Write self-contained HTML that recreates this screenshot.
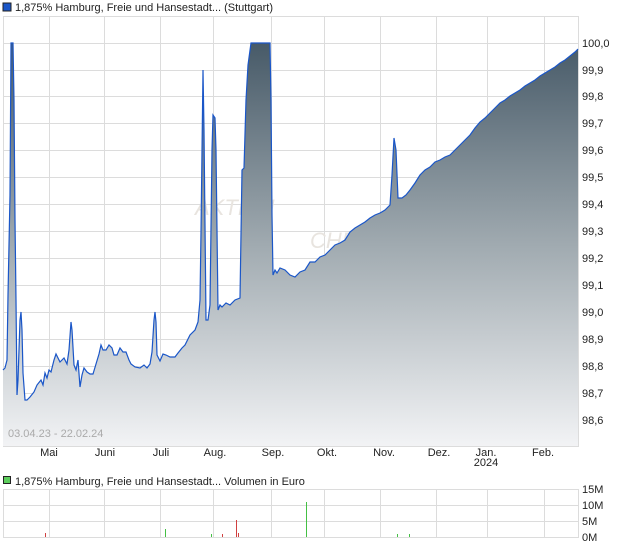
<!DOCTYPE html>
<html><head><meta charset="utf-8"><style>
body{margin:0;background:#fff;}
svg{display:block;font-family:"Liberation Sans",sans-serif;}
</style></head><body>
<svg width="620" height="546" viewBox="0 0 620 546" xmlns="http://www.w3.org/2000/svg">
<defs>
<linearGradient id="g" gradientUnits="userSpaceOnUse" x1="0" y1="43" x2="0" y2="446">
<stop offset="0" stop-color="#475a68"/>
<stop offset="0.5" stop-color="#a0aab0"/>
<stop offset="1" stop-color="#f2f3f5"/>
</linearGradient>
</defs>
<rect x="3" y="3" width="8" height="8" fill="#1a56c8" stroke="#222" stroke-width="1"/>
<text x="15" y="11" font-size="11" fill="#222">1,875% Hamburg, Freie und Hansestadt... (Stuttgart)</text>
<!-- grid -->
<g stroke="#dcdcdc" stroke-width="1">
<rect x="3.5" y="16.5" width="575" height="430" fill="none"/>
<line x1="3" y1="43.5" x2="578" y2="43.5"/><line x1="3" y1="70.5" x2="578" y2="70.5"/><line x1="3" y1="96.5" x2="578" y2="96.5"/><line x1="3" y1="123.5" x2="578" y2="123.5"/><line x1="3" y1="150.5" x2="578" y2="150.5"/><line x1="3" y1="177.5" x2="578" y2="177.5"/><line x1="3" y1="204.5" x2="578" y2="204.5"/><line x1="3" y1="231.5" x2="578" y2="231.5"/><line x1="3" y1="258.5" x2="578" y2="258.5"/><line x1="3" y1="285.5" x2="578" y2="285.5"/><line x1="3" y1="312.5" x2="578" y2="312.5"/><line x1="3" y1="339.5" x2="578" y2="339.5"/><line x1="3" y1="366.5" x2="578" y2="366.5"/><line x1="3" y1="393.5" x2="578" y2="393.5"/><line x1="3" y1="420.5" x2="578" y2="420.5"/>
<line x1="49.5" y1="16" x2="49.5" y2="446"/><line x1="104.5" y1="16" x2="104.5" y2="446"/><line x1="160.5" y1="16" x2="160.5" y2="446"/><line x1="213.5" y1="16" x2="213.5" y2="446"/><line x1="271.5" y1="16" x2="271.5" y2="446"/><line x1="324.5" y1="16" x2="324.5" y2="446"/><line x1="380.5" y1="16" x2="380.5" y2="446"/><line x1="436.5" y1="16" x2="436.5" y2="446"/><line x1="487.5" y1="16" x2="487.5" y2="446"/><line x1="544.5" y1="16" x2="544.5" y2="446"/>
</g>
<text x="195" y="215" font-size="22" fill="#e8e4df" font-style="italic">AKTIEN</text>
<text x="310" y="248" font-size="22" fill="#e8e4df" font-style="italic">CHECK</text>
<path id="ln" d="M3,370 L5,368 L7,360 L8,295 L10,195 L11,43 L13,43 L14,100 L15,220 L16,300 L17,395 L18,380 L20,320 L21,312 L22,330 L23,373 L25,400 L27,400 L30,397 L34,392 L37,385 L41,380 L43,385 L45,373 L47,378 L49,370 L51,372 L54,360 L56,354 L60,362 L64,358 L67,364 L69,350 L71,322 L72,330 L74,365 L76,370 L78,360 L80,387 L82,375 L84,368 L87,372 L90,374 L93,374 L96,364 L99,354 L101,345 L103,350 L106,350 L109,345 L112,348 L114,355 L117,355 L120,348 L123,352 L126,352 L129,360 L131,364 L135,367 L140,368 L144,365 L147,368 L150,364 L152,352 L154,320 L155,312 L156,322 L157,355 L160,361 L163,354 L166,355 L170,357 L175,357 L178,353 L182,348 L185,345 L190,335 L195,330 L198,322 L200,300 L201,232 L203,70 L204,130 L206,320 L208,320 L210,305 L212,150 L213,115 L215,118 L216,150 L218,310 L220,305 L222,307 L226,303 L230,305 L235,300 L240,298 L242,170 L244,168 L246,100 L248,65 L251,43 L270,43 L271,100 L272,215 L273,275 L275,270 L277,273 L280,268 L285,270 L290,275 L295,277 L300,272 L305,270 L310,262 L315,262 L320,257 L325,255 L330,250 L335,245 L340,243 L345,240 L350,232 L355,228 L360,225 L365,222 L370,218 L375,215 L380,213 L385,210 L390,205 L392,175 L394,138 L396,150 L398,198 L402,198 L406,195 L410,190 L415,183 L420,175 L425,170 L430,167 L435,162 L440,160 L445,157 L450,155 L455,150 L460,145 L465,140 L470,135 L475,128 L480,122 L485,118 L490,113 L495,108 L500,103 L505,100 L510,96 L515,93 L520,90 L525,86 L530,83 L535,80 L540,76 L545,73 L550,70 L555,67 L560,63 L565,60 L570,56 L575,52 L578,49" fill="none"/>
<path d="M3,370 L5,368 L7,360 L8,295 L10,195 L11,43 L13,43 L14,100 L15,220 L16,300 L17,395 L18,380 L20,320 L21,312 L22,330 L23,373 L25,400 L27,400 L30,397 L34,392 L37,385 L41,380 L43,385 L45,373 L47,378 L49,370 L51,372 L54,360 L56,354 L60,362 L64,358 L67,364 L69,350 L71,322 L72,330 L74,365 L76,370 L78,360 L80,387 L82,375 L84,368 L87,372 L90,374 L93,374 L96,364 L99,354 L101,345 L103,350 L106,350 L109,345 L112,348 L114,355 L117,355 L120,348 L123,352 L126,352 L129,360 L131,364 L135,367 L140,368 L144,365 L147,368 L150,364 L152,352 L154,320 L155,312 L156,322 L157,355 L160,361 L163,354 L166,355 L170,357 L175,357 L178,353 L182,348 L185,345 L190,335 L195,330 L198,322 L200,300 L201,232 L203,70 L204,130 L206,320 L208,320 L210,305 L212,150 L213,115 L215,118 L216,150 L218,310 L220,305 L222,307 L226,303 L230,305 L235,300 L240,298 L242,170 L244,168 L246,100 L248,65 L251,43 L270,43 L271,100 L272,215 L273,275 L275,270 L277,273 L280,268 L285,270 L290,275 L295,277 L300,272 L305,270 L310,262 L315,262 L320,257 L325,255 L330,250 L335,245 L340,243 L345,240 L350,232 L355,228 L360,225 L365,222 L370,218 L375,215 L380,213 L385,210 L390,205 L392,175 L394,138 L396,150 L398,198 L402,198 L406,195 L410,190 L415,183 L420,175 L425,170 L430,167 L435,162 L440,160 L445,157 L450,155 L455,150 L460,145 L465,140 L470,135 L475,128 L480,122 L485,118 L490,113 L495,108 L500,103 L505,100 L510,96 L515,93 L520,90 L525,86 L530,83 L535,80 L540,76 L545,73 L550,70 L555,67 L560,63 L565,60 L570,56 L575,52 L578,49 L578,446 L3,446 Z" fill="url(#g)"/>
<use href="#ln" stroke="#1a56c8" stroke-width="1.2"/>
<text x="8" y="437" font-size="11" fill="#aaa">03.04.23 - 22.02.24</text>
<g font-size="11" fill="#222">
<text x="582" y="47">100,0</text><text x="582" y="74">99,9</text><text x="582" y="100">99,8</text><text x="582" y="127">99,7</text><text x="582" y="154">99,6</text><text x="582" y="181">99,5</text><text x="582" y="208">99,4</text><text x="582" y="235">99,3</text><text x="582" y="262">99,2</text><text x="582" y="289">99,1</text><text x="582" y="316">99,0</text><text x="582" y="343">98,9</text><text x="582" y="370">98,8</text><text x="582" y="397">98,7</text><text x="582" y="424">98,6</text>
</g>
<g font-size="11" fill="#222" text-anchor="middle">
<text x="49" y="456">Mai</text><text x="105" y="456">Juni</text><text x="161" y="456">Juli</text><text x="215" y="456">Aug.</text><text x="273" y="456">Sep.</text><text x="327" y="456">Okt.</text><text x="384" y="456">Nov.</text><text x="439" y="456">Dez.</text><text x="486" y="456">Jan.</text><text x="486" y="466">2024</text><text x="543" y="456">Feb.</text>
</g>
<rect x="3.5" y="476.5" width="7" height="7" fill="#5ccd5c" stroke="#222" stroke-width="1"/>
<text x="15" y="485" font-size="11" fill="#222">1,875% Hamburg, Freie und Hansestadt... Volumen in Euro</text>
<g stroke="#dcdcdc" stroke-width="1">
<rect x="3.5" y="489.5" width="575" height="48" fill="none"/>
<line x1="3" y1="505.5" x2="578" y2="505.5"/><line x1="3" y1="521.5" x2="578" y2="521.5"/>
<line x1="49.5" y1="489" x2="49.5" y2="537"/><line x1="104.5" y1="489" x2="104.5" y2="537"/><line x1="160.5" y1="489" x2="160.5" y2="537"/><line x1="213.5" y1="489" x2="213.5" y2="537"/><line x1="271.5" y1="489" x2="271.5" y2="537"/><line x1="324.5" y1="489" x2="324.5" y2="537"/><line x1="380.5" y1="489" x2="380.5" y2="537"/><line x1="436.5" y1="489" x2="436.5" y2="537"/><line x1="487.5" y1="489" x2="487.5" y2="537"/><line x1="544.5" y1="489" x2="544.5" y2="537"/>
</g>
<g stroke-width="1">
<line x1="45.5" y1="533" x2="45.5" y2="537" stroke="#d04040"/>
<line x1="165.5" y1="529" x2="165.5" y2="537" stroke="#44c044"/>
<line x1="211.5" y1="534" x2="211.5" y2="537" stroke="#44c044"/>
<line x1="222.5" y1="534" x2="222.5" y2="537" stroke="#d04040"/>
<line x1="236.5" y1="520" x2="236.5" y2="537" stroke="#d04040"/>
<line x1="238.5" y1="533" x2="238.5" y2="537" stroke="#d04040"/>
<line x1="306.5" y1="502" x2="306.5" y2="537" stroke="#44c044"/>
<line x1="397.5" y1="534" x2="397.5" y2="537" stroke="#44c044"/>
<line x1="409.5" y1="534" x2="409.5" y2="537" stroke="#44c044"/>
</g>
<g font-size="11" fill="#222">
<text x="582" y="493">15M</text><text x="582" y="509">10M</text><text x="582" y="525">5M</text><text x="582" y="541">0M</text>
</g>
</svg>
</body></html>
